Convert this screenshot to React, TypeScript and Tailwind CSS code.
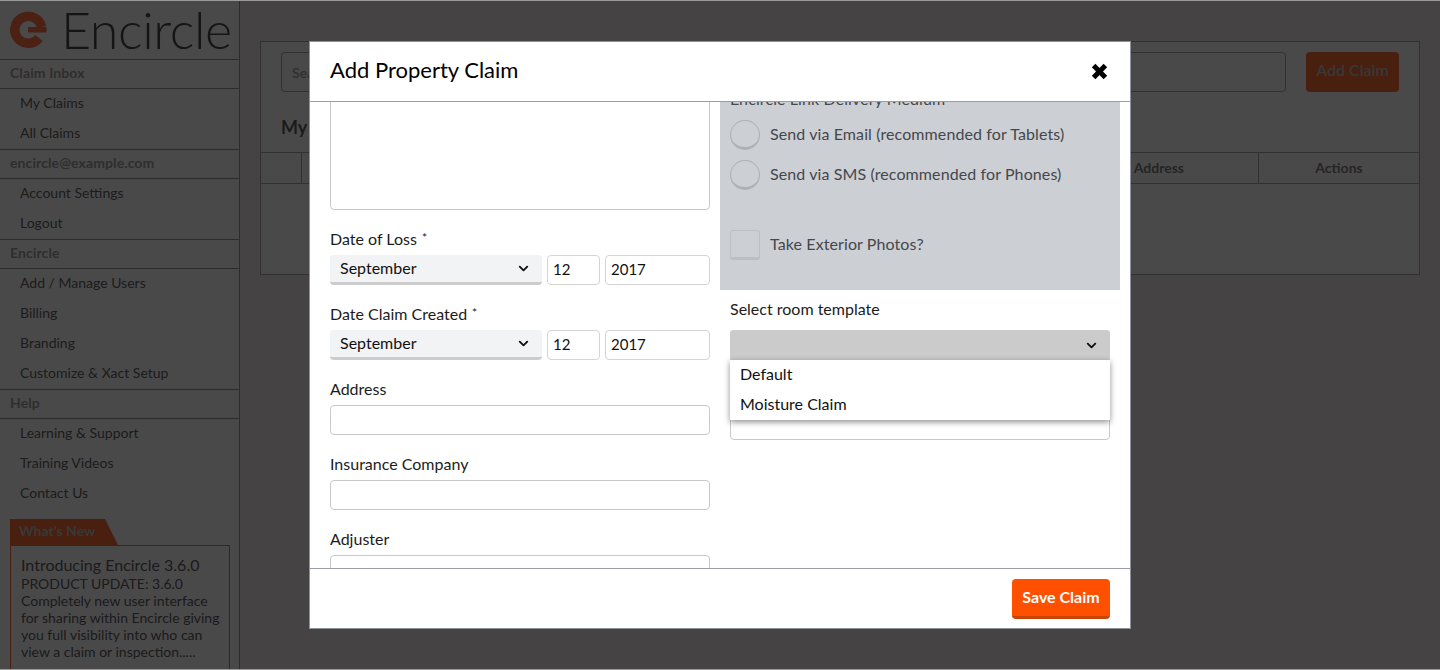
import { ChevronDown } from "lucide-react";

const FONT = "font-['Lato','Liberation_Sans',sans-serif]";

const NAV_SECTIONS = [
  { title: "Claim Inbox", items: ["My Claims", "All Claims"] },
  { title: "encircle@example.com", items: ["Account Settings", "Logout"] },
  { title: "Encircle", items: ["Add / Manage Users", "Billing", "Branding", "Customize & Xact Setup"] },
  { title: "Help", items: ["Learning & Support", "Training Videos", "Contact Us"] },
];

function Logo() {
  return (
    <div className="flex h-[59px] items-center pl-[9px]">
      <svg width="38" height="38" viewBox="0 0 38 38" fill="none">
        <path d="M32.5 16A13.5 13.5 0 1 0 30 27" stroke="#f97040" strokeWidth="9.5" />
        <path d="M19 16h18.5v5.5H19z" fill="#f97040" />
      </svg>
      <span className="ml-[14px] pb-[2px] text-[52px] leading-none font-light tracking-[-0.4px] text-[#4c4848]">
        Encircle
      </span>
    </div>
  );
}

function Sidebar() {
  return (
    <aside className="h-[670px] w-[240px] shrink-0 overflow-hidden border-r border-[#9b9898] bg-[#f7f5f5]">
      <Logo />
      {NAV_SECTIONS.map((section) => (
        <div key={section.title} className="border-t border-[#9b9898]">
          <div className="flex h-[29px] items-center border-b border-[#9b9898] pb-[3px] pl-[10px] text-[14px] font-bold tracking-[0.1px] text-[#9c9a9a]">
            {section.title}
          </div>
          <ul>
            {section.items.map((item) => (
              <li key={item} className="flex h-[30px] items-center pb-[4px] pl-[20px] text-[14px] text-[#605e5e]">
                {item}
              </li>
            ))}
          </ul>
        </div>
      ))}
      <div className="mt-[10px] pl-[10px]">
        <div className="flex h-[26px] w-[108px] items-center bg-[#f46a35] pb-[3px] pl-[9px] text-[14px] font-bold text-[#bbb] [clip-path:polygon(0_0,95px_0,108px_100%,0_100%)]">
          What's New
        </div>
        <div className="h-[130px] w-[220px] border border-[#f46a35] pt-[9px] pr-[6px] pl-[10px] text-[14px] leading-[17px] text-[#5c5a62]">
          <p className="text-[16px] leading-[20px]">Introducing Encircle 3.6.0</p>
          <p>PRODUCT UPDATE: 3.6.0</p>
          <p>Completely new user interface for sharing within Encircle giving you full visibility into who can view a claim or inspection.....</p>
        </div>
      </div>
    </aside>
  );
}

function ClaimsPanel() {
  return (
    <main className="flex-1 px-[20px] pt-[41px]">
      <section className="h-[234px] border border-[#a8a5a5] bg-[#f7f5f5]">
        <div className="flex gap-[20px] pt-[10px] pr-[20px] pl-[20px]">
          <div className="flex h-[40px] flex-1 items-center rounded-[4px] border border-[#a8a5a5] pl-[10px] text-[14px] font-bold text-[#aaa8a8]">
            Search
          </div>
          <button className="h-[40px] w-[93px] rounded-[4px] bg-[#f46a35] pb-[4px] text-[16px] font-semibold text-[#bbb]">
            Add Claim
          </button>
        </div>
        <h2 className="mt-[24px] pl-[20px] text-[18px] leading-[22px] font-bold text-[#5f5d5d]">My Claims</h2>
        <div className="mt-[14px] flex h-[32px] border-y border-[#a8a5a5] text-[14px] font-bold text-[#7c7a7a]">
          <div className="w-[41px] border-r border-[#a8a5a5]" />
          <div className="flex flex-1 items-center justify-end border-r border-[#a8a5a5] pr-[74px] pb-[2px]">Address</div>
          <div className="flex w-[160px] items-center justify-center pb-[2px]">Actions</div>
        </div>
      </section>
    </main>
  );
}

function FieldLabel({ children, required }: { children: string; required?: boolean }) {
  return (
    <label className="block h-[20px] text-[16px] leading-[17px] text-[#1c1c1c]">
      {children}
      {required && <span className="ml-[5px] align-top text-[12px] leading-[16px]">*</span>}
    </label>
  );
}

function TextBox({ className = "" }: { className?: string }) {
  return <div className={`rounded-[4px] border border-[#c9c9c9] bg-white ${className}`} />;
}

function DateRow() {
  return (
    <div className="mt-[5px] flex h-[30px] gap-[5px] text-[16px] text-[#111]">
      <div className="flex w-[212px] items-center justify-between rounded-[4px] border-b-[3px] border-[#ccc] bg-[#f2f3f5] pr-[11px] pl-[10px]">
        <span className="pb-[2px]">September</span>
        <ChevronDown size={15} strokeWidth={3} />
      </div>
      <div className="flex w-[53px] items-center rounded-[4px] border border-[#d4d4d4] pb-[1px] pl-[5px] text-[15px]">12</div>
      <div className="flex w-[105px] items-center rounded-[4px] border border-[#d4d4d4] pb-[1px] pl-[5px] text-[15px]">2017</div>
    </div>
  );
}

function ClaimForm() {
  return (
    <div className="flex h-[466px] gap-[10px] overflow-hidden pl-[20px]">
      <div className="w-[380px] shrink-0">
        <TextBox className="mt-[-20px] h-[128px]" />
        <div className="mt-[20px]">
          <FieldLabel required>Date of Loss</FieldLabel>
          <DateRow />
        </div>
        <div className="mt-[20px]">
          <FieldLabel required>Date Claim Created</FieldLabel>
          <DateRow />
        </div>
        <div className="mt-[20px]">
          <FieldLabel>Address</FieldLabel>
          <TextBox className="mt-[5px] h-[30px]" />
        </div>
        <div className="mt-[20px]">
          <FieldLabel>Insurance Company</FieldLabel>
          <TextBox className="mt-[5px] h-[30px]" />
        </div>
        <div className="mt-[20px]">
          <FieldLabel>Adjuster</FieldLabel>
          <TextBox className="mt-[5px] h-[30px]" />
        </div>
      </div>
      <div className="w-[400px] shrink-0">
        <div className="h-[188px] overflow-hidden bg-[#cccfd4] pl-[10px] text-[16px] tracking-[0.1px] text-[#45474c]">
          <p className="mt-[-13px] h-[26px] leading-[20px]">Encircle Link Delivery Medium</p>
          <div className="flex h-[40px] items-center gap-[10px]">
            <span className="size-[30px] rounded-full border border-b-[3px] border-[#aeb0b5] bg-[#cccfd4]" />
            <span className="pb-[2px]">Send via Email (recommended for Tablets)</span>
          </div>
          <div className="flex h-[40px] items-center gap-[10px]">
            <span className="size-[30px] rounded-full border border-b-[3px] border-[#aeb0b5] bg-[#cccfd4]" />
            <span className="pb-[2px]">Send via SMS (recommended for Phones)</span>
          </div>
          <div className="mt-[30px] flex h-[40px] items-center gap-[10px]">
            <span className="size-[30px] rounded-[3px] border border-b-[3px] border-[#bcbec3] bg-[#cccfd4]" />
            <span className="pb-[2px]">Take Exterior Photos?</span>
          </div>
        </div>
        <div className="relative pt-[10px] pl-[10px]">
          <FieldLabel>Select room template</FieldLabel>
          <div className="mt-[10px] flex h-[30px] w-[380px] items-center justify-end rounded-t-[3px] bg-[#cbcbcb] pr-[11px] text-[#111]">
            <ChevronDown size={15} strokeWidth={3} />
          </div>
          <TextBox className="mt-[20px] h-[60px] w-[380px]" />
          <ul className="absolute top-[70px] left-[10px] w-[380px] bg-white text-[16px] text-[#111] shadow-[0_2px_6px_rgba(0,0,0,0.45)]">
            <li className="flex h-[30px] items-center pb-[3px] pl-[10px]">Default</li>
            <li className="flex h-[30px] items-center pb-[3px] pl-[10px]">Moisture Claim</li>
          </ul>
        </div>
      </div>
    </div>
  );
}

function ClaimModal() {
  return (
    <div className="absolute top-[41px] left-[309px] flex h-[588px] w-[822px] flex-col border border-[#8e929b] bg-white">
      <header className="flex h-[60px] shrink-0 items-center justify-between border-b border-[#9a9da5] pr-[22px] pl-[20px]">
        <h1 className="pb-[5px] text-[22px] font-normal text-black">Add Property Claim</h1>
        <svg width="17" height="17" viewBox="0 0 17 17" fill="none" className="mb-[1px]">
          <path d="M2.6 2.6l11.8 11.8M14.4 2.6L2.6 14.4" stroke="#000" strokeWidth="5" />
        </svg>
      </header>
      <ClaimForm />
      <footer className="flex flex-1 items-center justify-end border-t border-[#9a9da5] pr-[20px]">
        <button className="h-[40px] w-[98px] rounded-[4px] border-b-[3px] border-[#c84408] bg-[#ff5000] text-[16px] font-bold text-white">
          Save Claim
        </button>
      </footer>
    </div>
  );
}

export default function App() {
  return (
    <div className={`relative flex h-[670px] w-[1440px] overflow-hidden bg-[#e7e2e2] ${FONT}`}>
      <Sidebar />
      <ClaimsPanel />
      <div className="absolute inset-0 border-y border-[#9a9a9a] bg-black/70" />
      <ClaimModal />
    </div>
  );
}
